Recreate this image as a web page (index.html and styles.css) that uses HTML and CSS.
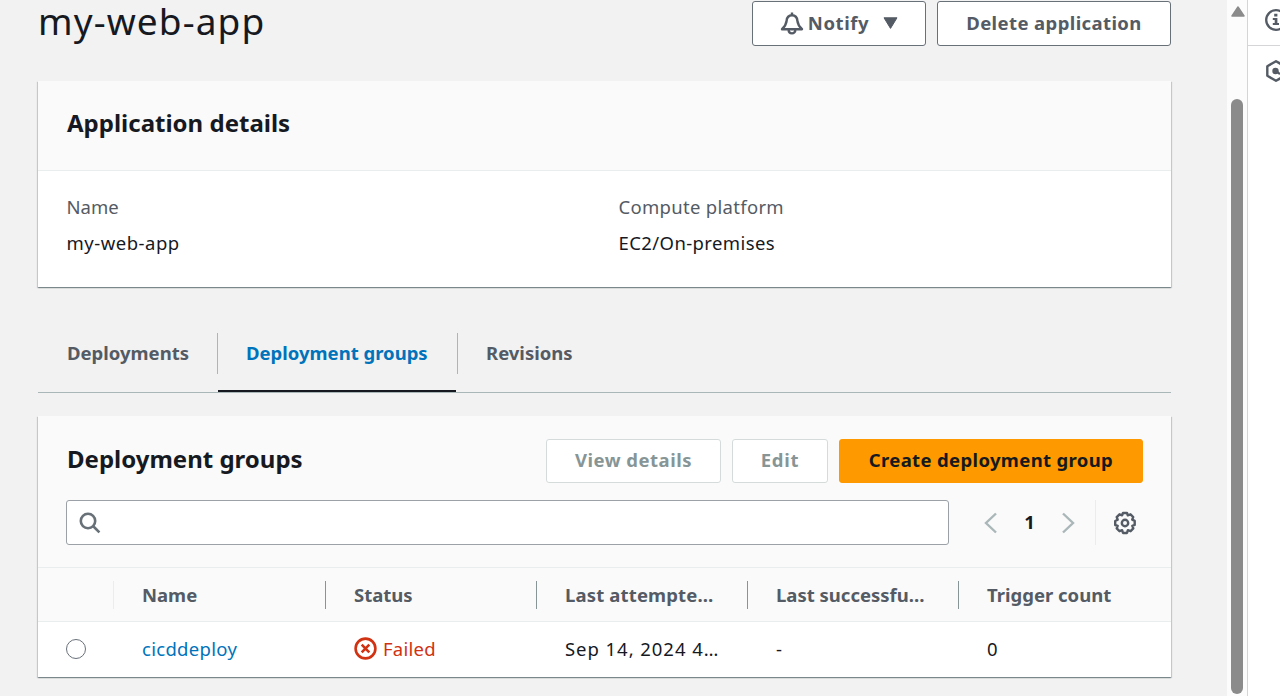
FILE: index.html
```
<!DOCTYPE html>
<html lang="en">
<head>
<meta charset="utf-8">
<title>my-web-app</title>
<link rel="stylesheet" href="styles.css">
</head>
<body>
<div class="shell">
  <main class="content">
    <header class="page-header">
      <h1><span class="t-title">my-web-app</span></h1>
      <div class="actions">
        <button class="btn notify">
          <svg class="bell" width="24" height="24" viewBox="0 0 24 24"><path d="M12 1.400v2.400M2 18.200C4.600 15.600 6.300 13 6.600 9.800 6.900 6.300 9 4.200 12 4.200s5.100 2.100 5.400 5.600c.3 3.200 2 5.800 4.600 8.400zM8.600 18.500c0 5.200 6.800 5.200 6.800 0" fill="none" stroke="currentColor" stroke-width="2.400" stroke-linejoin="round"/></svg>
          <span class="t-notify">Notify</span>
          <svg class="caret" width="15" height="12" viewBox="0 0 15 12"><path d="M1 .8h13L7.500 11.400z" fill="currentColor" stroke="currentColor" stroke-linejoin="round"/></svg>
        </button>
        <button class="btn delete"><span class="t-delete">Delete application</span></button>
      </div>
    </header>

    <section class="card details">
      <div class="details-head"><h2><span>Application details</span></h2></div>
      <dl class="fields">
        <div><dt><span>Name</span></dt><dd><span class="t-webapp">my-web-app</span></dd></div>
        <div><dt><span class="t-compute">Compute platform</span></dt><dd><span class="t-ec2">EC2/On-premises</span></dd></div>
      </dl>
    </section>

    <nav class="tabs">
      <a class="tab first"><span>Deployments</span></a>
      <a class="tab active"><span>Deployment groups</span></a>
      <a class="tab last"><span>Revisions</span></a>
    </nav>

    <section class="card groups">
      <div class="groups-head">
        <h2><span>Deployment groups</span></h2>
        <div class="actions">
          <button class="btn disabled view"><span class="t-view">View details</span></button>
          <button class="btn disabled edit"><span class="t-edit">Edit</span></button>
          <button class="btn primary"><span class="t-create">Create deployment group</span></button>
        </div>
      </div>
      <div class="filter">
        <label class="search">
          <svg width="22" height="22" viewBox="0 0 22 22"><g fill="none" stroke="currentColor" stroke-width="2.600"><circle cx="9" cy="9" r="7.200"/><path d="M14 14l6.400 6.400"/></g></svg>
        </label>
        <div class="pager">
          <svg class="prev" width="13" height="22" viewBox="0 0 13 22"><path d="M12 1.500L2 11l10 9.500" fill="none" stroke="currentColor" stroke-width="2.400"/></svg>
          <span class="page">1</span>
          <svg class="next" width="13" height="22" viewBox="0 0 13 22"><path d="M1 1.500L11 11 1 20.500" fill="none" stroke="currentColor" stroke-width="2.400"/></svg>
        </div>
        <div class="settings">
          <svg width="24" height="24" viewBox="0 0 24 24"><g fill="none" stroke="currentColor" stroke-width="2.400" stroke-linejoin="round"><path d="M10 2h4l.8 2.300 2.700-1 2.700 2.700-1 2.600 2.500 1.300v4l-2.400.9 1 2.600-2.700 2.800-2.700-1L14 22h-4l-.9-2.800-2.600 1-2.800-2.800 1-2.600L2.200 14v-4l2.500-1.300-1-2.600 2.800-2.800 2.600 1z"/><circle cx="12" cy="12" r="3.200"/></g></svg>
        </div>
      </div>
      <div class="row head">
        <div class="cell pick"></div>
        <div class="cell"><span>Name</span></div>
        <div class="cell"><span>Status</span></div>
        <div class="cell"><span class="t-attempt">Last attempte…</span></div>
        <div class="cell"><span>Last successfu…</span></div>
        <div class="cell"><span>Trigger count</span></div>
      </div>
      <div class="row body">
        <div class="cell pick"><span class="radio"></span></div>
        <div class="cell link"><span class="t-link">cicddeploy</span></div>
        <div class="cell failed">
          <svg width="23" height="23" viewBox="0 0 23 23"><g fill="none" stroke="currentColor" stroke-width="2.600"><circle cx="11.500" cy="11.500" r="9.900"/><path d="M7.700 7.700l7.600 7.600M15.300 7.700l-7.600 7.600"/></g></svg>
          <span class="t-failed">Failed</span>
        </div>
        <div class="cell"><span class="t-date">Sep 14, 2024 4…</span></div>
        <div class="cell"><span>-</span></div>
        <div class="cell"><span>0</span></div>
      </div>
    </section>
  </main>
  <div class="scrollbar">
    <svg width="14" height="11" viewBox="0 0 14 11"><path d="M7 1L13 10H1z" fill="#8b8b8b" stroke="#8b8b8b" stroke-width="1.500" stroke-linejoin="round"/></svg>
    <div class="thumb"></div>
  </div>
  <aside class="rail">
    <div class="rail-item info">
      <svg width="22" height="22" viewBox="0 0 22 22"><circle cx="11" cy="11" r="9.800" fill="none" stroke="currentColor" stroke-width="2.300"/><path d="M9.200 4.800h3.200v2.800H9.200zM7.800 9h4.600v5H14v2H7.800v-2h1.900v-3H7.800z" fill="currentColor"/></svg>
    </div>
    <div class="rail-item">
      <svg width="22" height="22" viewBox="0 0 22 22"><path d="M11 1.200l8.700 5v9.600l-8.700 5-8.700-5V6.200z" fill="none" stroke="currentColor" stroke-width="2.400" stroke-linejoin="round"/><circle cx="10.500" cy="11" r="3.200" fill="currentColor"/><path d="M11 11l4 3" stroke="currentColor" stroke-width="2.200"/></svg>
    </div>
  </aside>
</div>
</body>
</html>
```
FILE: styles.css
```
* { box-sizing: border-box; }
body {
  margin: 0;
  background: #f2f3f3;
  color: #16191f;
  font-family: "Noto Sans", "Open Sans", sans-serif;
  font-size: 18.5px;
  line-height: 28px;
  overflow: hidden;
}
h1, h2, dl, dd { margin: 0; }
svg { display: block; flex: none; }
span { white-space: nowrap; }
.shell { display: flex; height: 696px; overflow: hidden; }
.content { width: 1227px; padding: 0 56px 0 38px; background: #f2f2f2; }
.page-header { display: flex; justify-content: space-between; height: 81px; }
h1 { font-size: 37px; font-weight: 400; line-height: 42px; }
h2 { font-size: 24px; font-weight: 700; line-height: 32px; }
.t-title { letter-spacing: 1.1px; }
.t-notify { letter-spacing: .6px; }
.t-delete { letter-spacing: .4px; }
.t-webapp { letter-spacing: .5px; }
.t-compute { letter-spacing: .3px; }
.t-ec2 { letter-spacing: .4px; }
.t-view { letter-spacing: .5px; }
.t-edit { letter-spacing: .7px; }
.t-create { letter-spacing: .35px; }
.t-attempt { letter-spacing: .15px; }
.t-link { letter-spacing: .3px; }
.t-failed { letter-spacing: .25px; }
.t-date { letter-spacing: .95px; }
.actions { display: flex; gap: 11px; }
.page-header .actions { padding-top: 1px; }
.btn {
  display: flex;
  align-items: center;
  justify-content: center;
  height: 45px;
  padding: 0 0 2px;
  border: 1px solid #687078;
  border-radius: 3px;
  background: #fff;
  color: #545b64;
  font: 700 18.5px/28px "Noto Sans", "Open Sans", sans-serif;
}
.notify { width: 174px; }
.bell { margin-right: 4px; }
.caret { margin-left: 14px; }
.delete { width: 234px; margin-right: 0; }
.card {
  width: 1133px;
  background: #fff;
  box-shadow: 0 1px 1px 0 rgba(0, 28, 36, .3), 1px 1px 1px 0 rgba(0, 28, 36, .15), -1px 1px 1px 0 rgba(0, 28, 36, .15);
}
.details { height: 206px; }
.details-head { height: 90px; padding: 26px 29px; background: #fafafa; border-bottom: 1px solid #eaeded; }
.fields { display: grid; grid-template-columns: 552px 1fr; padding: 21px 29px 0 28.5px; }
dt { color: #545b64; line-height: 30px; }
dd { line-height: 30px; margin-top: 6px; }
.tabs { display: flex; height: 60px; margin-top: 46px; width: 1133px; border-bottom: 1px solid #aab7b8; }
.tab { display: flex; height: 60px; color: #545b64; font-weight: 700; }
.tab span { width: 100%; height: 41px; padding: 6px 28px 0 29px; border-right: 1px solid #aab7b8; }
.first { width: 180px; }
.active { width: 240px; color: #0073bb; background: linear-gradient(#16191f, #16191f) 0 57px / 238px 2px no-repeat; }
.active span, .last span { padding-left: 28px; }
.last span { border-right: 0; }
.groups { height: 261px; margin-top: 23px; background: #fafafa; }
.groups-head { display: flex; justify-content: space-between; padding: 23px 28px 0 29px; height: 84px; }
.groups-head h2 { margin-top: 4px; }
.groups-head .btn { height: 44px; }
.disabled { border-color: #d5dbdb; color: #879596; }
.view { width: 175px; }
.edit { width: 96px; }
.primary { width: 304px; background: #ff9900; border-color: #ff9900; color: #16191f; }
.filter { display: flex; padding: 0 29px 0 28px; height: 67px; }
.search { display: flex; width: 883px; height: 45px; padding: 11px 12px; border: 1px solid #9ba1a6; border-radius: 3px; background: #fff; color: #687078; }
.pager { display: flex; align-items: center; height: 45px; margin-left: 35px; color: #aab7b8; }
.page { width: 65px; text-align: center; color: #16191f; font-weight: 700; padding-bottom: 2px; }
.settings { display: flex; align-items: center; height: 45px; margin-left: 20px; padding-left: 17px; border-left: 1px solid #eaeded; color: #545b64; }
.row { display: grid; grid-template-columns: 76px 212px 211px 211px 211px 1fr; }
.head { height: 55px; padding-top: 13px; border-top: 1px solid #eaeded; border-bottom: 1px solid #eaeded; color: #545b64; font-weight: 700; }
.cell { display: flex; align-items: center; padding-left: 28px; height: 28px; }
.head .cell { border-right: 1px solid #879596; }
.head .pick { border-right-color: #eaeded; }
.head .cell:last-child { border-right: 0; }
.head span { padding-bottom: 1px; }
.body { height: 55px; padding-top: 13px; background: #fff; }
.radio { width: 20px; height: 20px; border: 1.500px solid #687078; border-radius: 50%; background: #fff; }
.link { color: #0073bb; }
.failed { color: #d13212; gap: 6px; }
.failed svg { margin-top: -2px; }
.scrollbar { width: 21px; padding: 6px 0 0 4px; background: #fcfcfc; border-right: 1px solid #d5d5d8; }
.thumb { width: 12px; height: 595px; margin-top: 82px; border-radius: 6px; background: #8b8b8b; }
.rail { flex: none; width: 32px; overflow: hidden; background: #fff; color: #545b64; }
.rail-item { height: 50px; padding: 14px 0 0 17px; }
.rail .info { height: 46px; padding-top: 9px; border-bottom: 1px solid #d5d5d8; }
```
